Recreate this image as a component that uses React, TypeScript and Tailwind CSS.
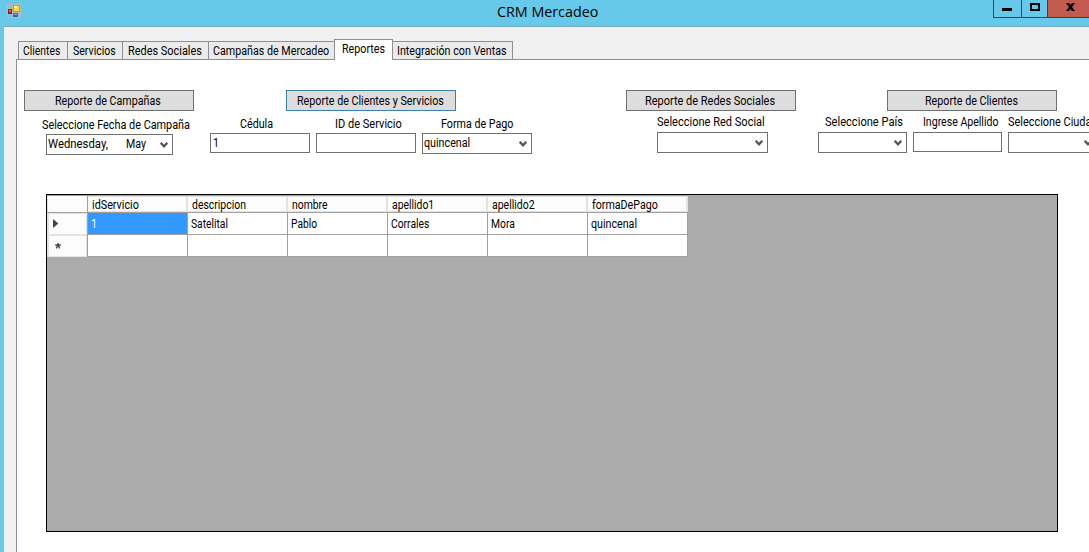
import type { ReactNode } from "react";

type TextProps = { children: ReactNode; width: string; squeeze?: string; className?: string };

function Text({ children, width, squeeze = "scale-x-[.893]", className = "" }: TextProps) {
  return (
    <span className={`block h-[14px] shrink-0 whitespace-nowrap ${width} ${className}`}>
      <span className={`inline-block origin-left align-top ${squeeze}`}>{children}</span>
    </span>
  );
}

function Tab({ children, width }: { children: ReactNode; width: string }) {
  return (
    <div className={`-mr-px flex h-[18px] shrink-0 border border-b-0 border-[#8c8e98] bg-[#ebebeb] pt-[2px] pl-[4px] ${width}`}>
      {children}
    </div>
  );
}

function ReportButton({ children, focused = false }: { children: ReactNode; focused?: boolean }) {
  return (
    <button
      className={`flex h-[21px] w-[170px] justify-center border bg-[#dddddd] pt-[3px] pr-[2px] leading-[14px] ${
        focused ? "border-[#3c7fb1]" : "border-[#707070]"
      }`}
    >
      {children}
    </button>
  );
}

function Chevron() {
  return (
    <svg className="mt-[5px] mr-[4px] ml-auto shrink-0" width="8" height="6" viewBox="0 0 8 6">
      <path d="M0.7 0.8 L4 4.3 L7.3 0.8" fill="none" stroke="#555555" strokeWidth="2.2" />
    </svg>
  );
}

function Box({ width, combo = false, children }: { width: string; combo?: boolean; children?: ReactNode }) {
  return (
    <div className={`flex shrink-0 border border-[#707070] bg-white pt-[2px] pl-[2px] ${combo ? "h-[21px]" : "h-[20px]"} ${width}`}>
      {children}
      {combo && <Chevron />}
    </div>
  );
}

const columns = [
  { name: "idServicio", value: "1", nw: "w-[47px]", ns: "scale-x-[.9]", vw: "w-[6px]", vs: "scale-x-[.9]" },
  { name: "descripcion", value: "Satelital", nw: "w-[54px]", ns: "scale-x-[.87]", vw: "w-[37px]", vs: "scale-x-[.856]" },
  { name: "nombre", value: "Pablo", nw: "w-[36px]", ns: "scale-x-[.865]", vw: "w-[26px]", vs: "scale-x-[.855]" },
  { name: "apellido1", value: "Corrales", nw: "w-[42px]", ns: "scale-x-[.865]", vw: "w-[38px]", vs: "scale-x-[.86]" },
  { name: "apellido2", value: "Mora", nw: "w-[43px]", ns: "scale-x-[.875]", vw: "w-[24px]", vs: "scale-x-[.86]" },
  { name: "formaDePago", value: "quincenal", nw: "w-[66px]", ns: "scale-x-[.89]", vw: "w-[46px]", vs: "scale-x-[.89]" },
];

function ResultGrid() {
  return (
    <div className="mt-[40px] ml-[29px] h-[338px] w-[1012px] border border-black bg-[#ababab]">
      <div className="w-[641px] border-t border-[#a0a0a0] bg-white">
        <div className="flex h-[17px] border-b border-[#a0a0a0]">
          <div className="h-4 w-[41px] border-r border-l border-[#a0a0a0] border-l-[#e3e3e3] bg-[#fcfcfc]" />
          {columns.map((c) => (
            <div key={c.name} className="h-4 w-[100px] border-t border-r-2 border-b border-[#e3e3e3] bg-[#fcfcfc] pt-px pl-[4px]">
              <Text width={c.nw} squeeze={c.ns}>{c.name}</Text>
            </div>
          ))}
        </div>
        <div className="flex h-[22px]">
          <div className="flex w-[41px] shrink-0 border-r border-[#a0a0a0] bg-[#e3e3e3] py-px pr-px pl-[2px]">
            <div className="w-full bg-[#fcfcfc] pt-[5px] pl-[4px]">
              <svg width="6" height="9" viewBox="0 0 6 9"><path d="M0 0 L5.3 4.5 L0 9Z" fill="#444444" /></svg>
            </div>
          </div>
          {columns.map((c, i) => (
            <div
              key={c.name}
              className={`flex w-[100px] border-r border-b border-[#a0a0a0] pt-[4px] pl-[3px] ${i === 0 ? "bg-[#3399ff] text-white" : "bg-white"}`}
            >
              <Text width={c.vw} squeeze={c.vs}>{c.value}</Text>
            </div>
          ))}
        </div>
        <div className="flex h-[22px]">
          <div className="flex w-[41px] shrink-0 border-r border-[#a0a0a0] bg-[#e3e3e3] py-px pr-px pl-[2px]">
            <div className="w-full bg-[#fcfcfc] pt-[7px] pl-[6px]">
              <svg width="6" height="6" viewBox="0 0 6 6"><path d="M3 0V3M0.2 2L5.8 2M1.2 5.4L3 2.5L4.8 5.4M1.5 3.2H4.5" stroke="#444444" strokeWidth="1.3" fill="none" /></svg>
            </div>
          </div>
          {columns.map((c) => (
            <div key={c.name} className="w-[100px] border-r border-b border-[#a0a0a0] bg-white" />
          ))}
        </div>
      </div>
    </div>
  );
}

function TitleBar() {
  return (
    <header className="flex h-[26px] bg-[#66c9e9]">
      <svg className="mt-[4px] ml-[7px] shrink-0" width="14" height="14" viewBox="0 0 14 14" shapeRendering="crispEdges">
        <path d="M0 0H14V14H0Z" fill="#b9b9b9" />
        <path d="M1 1H5V4H1ZM1 10H5V13H1ZM12 10H13V13H12Z" fill="#7fc4de" />
        <path d="M1 5H5V10H1Z" fill="#a01414" />
        <path d="M2 6H4V8H2Z" fill="#e86a5a" />
        <path d="M6 1H13V8H6Z" fill="#d39a10" />
        <path d="M7 2H12V7H7Z" fill="#ffd83c" />
        <path d="M7 2H10V4H7Z" fill="#fff0a0" />
        <path d="M6 9H11V13H6Z" fill="#3465cc" />
        <path d="M7 10H10V11H7Z" fill="#86adf2" />
      </svg>
      <h1 className="ml-[476px] h-[22px] w-[101px] whitespace-nowrap pt-[1px] font-['Open_Sans',sans-serif] text-[15px] leading-[21px]">
        <span className="inline-block origin-left scale-x-[.953]">CRM Mercadeo</span>
      </h1>
      <div className="ml-auto flex h-[18px] w-[96px] border-b border-l border-[#2c4650]">
        <div className="w-[28px] border-r border-[#2c4650] pt-[8px] pl-[8px]"><div className="h-[3px] w-[10px] bg-black" /></div>
        <div className="w-[26px] border-r border-[#2c4650] pt-[3px] pl-[8px]"><div className="h-[8px] w-[10px] border-2 border-black" /></div>
        <div className="flex-1 bg-[#c35a50] pt-[3px] pl-[18px]">
          <svg width="9" height="8" viewBox="0 0 9 8"><path d="M0 0H3L4.5 2L6 0H9L6 4L9 8H6L4.5 6L3 8H0L3 4Z" /></svg>
        </div>
      </div>
    </header>
  );
}

export default function App() {
  return (
    <div className="h-[552px] w-[1089px] overflow-hidden bg-[#66c9e9] font-['Roboto',sans-serif] text-[12px] leading-[14px] text-black">
      <TitleBar />
      <main className="ml-[4px] h-[526px] border-t border-[#7fabbf] bg-[#f0f0f0] pl-[12px]">
        <nav className="flex h-[32px] items-end pl-[2px]">
          <Tab width="w-[50px]"><Text width="w-[37px]" squeeze="scale-x-[.865]">Clientes</Text></Tab>
          <Tab width="w-[56px]"><Text width="w-[43px]" squeeze="scale-x-[.88]" className="ml-px">Servicios</Text></Tab>
          <Tab width="w-[87px]"><Text width="w-[74px]" squeeze="scale-x-[.91]" className="ml-px">Redes Sociales</Text></Tab>
          <Tab width="w-[127px]"><Text width="w-[116px]">Campañas de Mercadeo</Text></Tab>
          <div className="relative z-10 -mb-px flex h-[21px] w-[59px] border border-b-0 border-[#8c8e98] bg-white pt-[2px] pl-[7px]">
            <Text width="w-[43px]">Reportes</Text>
          </div>
          <div className="-ml-px flex"><Tab width="w-[121px]"><Text width="w-[110px]">Integración con Ventas</Text></Tab></div>
        </nav>
        <section className="h-[493px] border-t border-l border-[#8c8e98] bg-white">
          <div className="flex h-[94px] pt-[30px] pl-[7px]">
            <div className="w-[186px] shrink-0">
              <ReportButton><Text width="w-[106px]">Reporte de Campañas</Text></ReportButton>
              <div className="mt-[7px] ml-[18px]"><Text width="w-[148px]" squeeze="scale-x-[.904]">Seleccione Fecha de Campaña</Text></div>
              <div className="mt-[2px] ml-[22px]">
                <Box width="w-[127px]" combo>
                  <Text width="w-[60px]" squeeze="scale-x-[.946]" className="-ml-px">Wednesday,</Text>
                  <Text width="w-[20px]" squeeze="scale-x-[.885]" className="ml-[18px]">May</Text>
                </Box>
              </div>
            </div>
            <div className="w-[416px] shrink-0">
              <div className="ml-[76px]"><ReportButton focused><Text width="w-[147px]">Reporte de Clientes y Servicios</Text></ReportButton></div>
              <div className="mt-[6px] flex gap-[6px]">
                <div className="flex flex-col gap-[2px]"><Text width="w-[33px]" className="ml-[30px]">Cédula</Text><Box width="w-[100px]"><Text width="w-[6px]">1</Text></Box></div>
                <div className="flex flex-col gap-[2px]"><Text width="w-[67px]" squeeze="scale-x-[.92]" className="ml-[19px]">ID de Servicio</Text><Box width="w-[100px]" /></div>
                <div className="flex flex-col gap-[2px]"><Text width="w-[72px]" className="ml-[19px]">Forma de Pago</Text><Box width="w-[110px]" combo><Text width="w-[46px]" className="-ml-px">quincenal</Text></Box></div>
              </div>
            </div>
            <div className="w-[192px] shrink-0">
              <ReportButton><Text width="w-[130px]" squeeze="scale-x-[.914]">Reporte de Redes Sociales</Text></ReportButton>
              <div className="mt-[4px] ml-[31px] flex flex-col gap-[3px]">
                <Text width="w-[108px]" squeeze="scale-x-[.92]">Seleccione Red Social</Text>
                <Box width="w-[111px]" combo />
              </div>
            </div>
            <div className="w-[300px] shrink-0">
              <div className="ml-[69px]"><ReportButton><Text width="w-[93px]">Reporte de Clientes</Text></ReportButton></div>
              <div className="mt-[4px] flex gap-[6px]">
                <div className="flex flex-col gap-[3px]"><Text width="w-[78px]" squeeze="scale-x-[.925]" className="ml-[7px]">Seleccione País</Text><Box width="w-[89px]" combo /></div>
                <div className="flex flex-col gap-[3px]"><Text width="w-[75px]" squeeze="scale-x-[.88]" className="ml-[10px]">Ingrese Apellido</Text><Box width="w-[89px]" /></div>
                <div className="flex flex-col gap-[3px]"><Text width="w-[88px]" squeeze="scale-x-[.91]">Seleccione Ciudad</Text><Box width="w-[89px]" combo /></div>
              </div>
            </div>
          </div>
          <ResultGrid />
        </section>
      </main>
    </div>
  );
}
